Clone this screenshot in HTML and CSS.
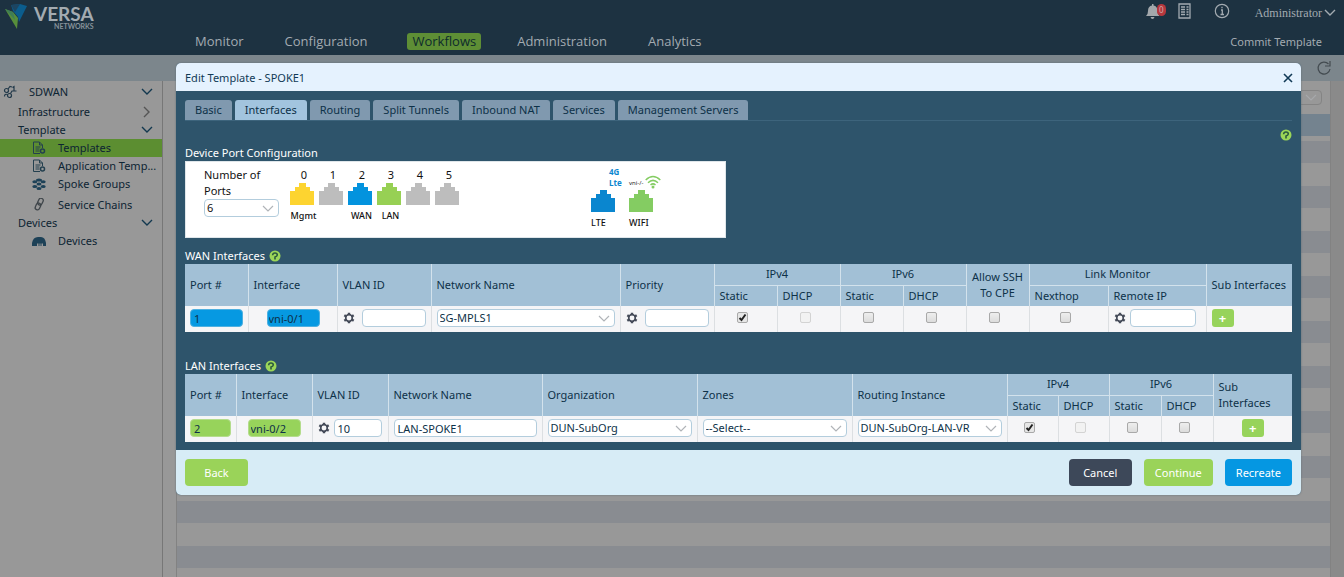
FILE: index.html
```html
<!DOCTYPE html>
<html lang="en">
<head>
<meta charset="utf-8">
<title>Edit Template - SPOKE1</title>
<link rel="stylesheet" href="styles.css">
</head>
<body>
<svg class="defs" aria-hidden="true">
  <symbol id="jack" viewBox="0 0 24 22"><path fill="currentColor" d="M0 22V8h5V4h4V0h7v4h4v4h4v14z"/></symbol>
  <symbol id="help" viewBox="0 0 12 12"><circle cx="6" cy="6" r="5.5" fill="#9bd658"/><path d="M3.600 5.200Q3.800 3 6 3t2.300 2Q8.200 6.300 6 7V9.500" fill="none" stroke="#2b5a3e" stroke-width="1.600"/></symbol>
  <symbol id="gear" viewBox="0 0 12 12"><path d="M6 .8v2M6 9.200v2M1.300 3.300l2 1.200M8.700 7.500l2 1.200M1.300 8.700l2-1.200M8.700 4.500l2-1.200" stroke="#454b59" stroke-width="2.400"/><circle cx="6" cy="6" r="3.300" fill="none" stroke="#454b59" stroke-width="1.700"/></symbol>
  <symbol id="down" viewBox="0 0 12 8"><path d="M1 1l5 5 5-5" fill="none" stroke="currentColor" stroke-width="1.400"/></symbol>
  <symbol id="doc" viewBox="0 0 14 14"><path d="M1.500 1h6l3 3v3M1.500 1v11.500H8M7.500 1v3h3M3.500 6h5M3.500 8h4M3.500 10h4" fill="none" stroke="currentColor"/><circle cx="10.500" cy="10" r="2" fill="none" stroke="currentColor" stroke-width="1.500"/></symbol>
</svg>

<header class="topbar">
  <a class="logo" href="#" aria-label="Versa Networks">
    <svg class="logo-mark" viewBox="0 0 24 26" aria-hidden="true"><path d="M0 5l8 3 5 6-1 11z" fill="#578f3b"/><path d="M0 5l8 3 2 8z" fill="#3f7d55"/><path d="M6 1l9-1 7 2-8 16-1-5-5-6z" fill="#0b5d8d"/><path d="M6 1l9-1-5 8z" fill="#1d4561"/></svg>
    <span class="logo-text"><b>VERSA</b><small>NETWORKS</small></span>
  </a>
  <nav class="mainnav">
    <a href="#">Monitor</a><a href="#">Configuration</a><a href="#" class="current">Workflows</a><a href="#">Administration</a><a href="#">Analytics</a>
  </nav>
  <div class="tools">
    <div class="tools-row">
      <button class="plain bell" aria-label="Notifications"><svg width="20" height="18" viewBox="0 0 20 18" aria-hidden="true"><path d="M1 14q2-1.500 2-5 0-5 4-5.500V2h1.500v1.500Q12.500 4 12.500 9q0 3.500 2 5zM5.500 15h4q-.5 2-2 2t-2-2z" fill="#a3a8ac"/></svg><span class="badge">0</span></button>
      <button class="plain list" aria-label="Tasks"><svg width="13" height="16" viewBox="0 0 13 16" aria-hidden="true"><path d="M1 1h11v14H1zM3 4h4M3 6.500h4M3 9h4M3 11.500h4M8.500 4h2M8.500 6.500h2M8.500 9h2M8.500 11.500h2" fill="none" stroke="#a3abb1" stroke-width="1.300"/></svg></button>
      <button class="plain info" aria-label="Information"><svg width="16" height="16" viewBox="0 0 16 16" aria-hidden="true"><circle cx="8" cy="8" r="6.700" fill="none" stroke="#a3abb1" stroke-width="1.200"/><path d="M7 7h1.300v4.500M6.500 11.500h3.500M8 3.800v1.500" fill="none" stroke="#a3abb1" stroke-width="1.300"/></svg></button>
      <button class="plain user">Administrator<svg width="12" height="8" aria-hidden="true"><use href="#down"/></svg></button>
    </div>
    <a class="commit" href="#">Commit Template</a>
  </div>
</header>

<div class="subbar"><button class="plain" aria-label="Refresh"><svg width="16" height="16" viewBox="0 0 16 16" aria-hidden="true"><path d="M12.500 4A6 6 0 1 0 14 9M14 1v5H9" fill="none" stroke="#434b50" stroke-width="1.200"/></svg></button></div>

<div class="page">
  <aside class="sidebar">
    <ul>
      <li class="root"><svg width="14" height="14" viewBox="0 0 14 14" aria-hidden="true"><g fill="none" stroke="#22394a" stroke-width="1.200"><circle cx="3.500" cy="5.500" r="2"/><circle cx="6.500" cy="10.500" r="2"/><path d="M5 4l2-2.500 2 .5M7.500 8.500l1.500-2.500h4.500M11 6V1.500L9.500 2.500M1.500 11.500q0-3 3-2"/></g></svg><a href="#">SDWAN</a><svg class="chev" width="12" height="8"><use href="#down"/></svg></li>
      <li class="group"><a href="#">Infrastructure</a><svg class="chev closed" width="12" height="8"><use href="#down"/></svg></li>
      <li class="group"><a href="#">Template</a><svg class="chev" width="12" height="8"><use href="#down"/></svg></li>
      <li class="leaf active"><svg width="14" height="14"><use href="#doc"/></svg><a href="#">Templates</a></li>
      <li class="leaf"><svg width="14" height="14"><use href="#doc"/></svg><a href="#">Application Temp...</a></li>
      <li class="leaf"><svg width="14" height="14" viewBox="0 0 14 14" aria-hidden="true"><g fill="#1d4157"><ellipse cx="7" cy="3" rx="3" ry="1.600"/><ellipse cx="2.800" cy="4.800" rx="2.500" ry="1.500"/><ellipse cx="11.200" cy="4.800" rx="2.500" ry="1.500"/><ellipse cx="7" cy="7" rx="2.500" ry="1.500"/><ellipse cx="2.800" cy="9.500" rx="2.500" ry="1.600"/><ellipse cx="11.200" cy="9.500" rx="2.500" ry="1.600"/><ellipse cx="7" cy="11.500" rx="2.500" ry="1.600"/></g></svg><a href="#">Spoke Groups</a></li>
      <li class="leaf chain"><svg width="14" height="14" viewBox="0 0 14 14" aria-hidden="true"><g fill="none" stroke="#3f454a" stroke-width="1.300"><rect x="6" y="0" width="4.500" height="7" rx="2.200" transform="rotate(25 8 4)"/><rect x="3.500" y="5" width="4.500" height="7" rx="2.200" transform="rotate(25 6 9)"/></g></svg><a href="#">Service Chains</a></li>
      <li class="group"><a href="#">Devices</a><svg class="chev" width="12" height="8"><use href="#down"/></svg></li>
      <li class="leaf"><svg width="14" height="14" viewBox="0 0 14 14" aria-hidden="true"><path d="M0 12V9q1-6 6-6h3q4 0 5 6v3h-3V9.500H9.500V12h-1V9.500h-1V12h-1V9.500H5V12z" fill="#1d4157"/></svg><a href="#">Devices</a></li>
    </ul>
  </aside>
  <main class="content">
    <div class="filter"><select aria-label="Filter"><option></option></select></div>
    <div class="grid-head"></div>
    <div class="grid-rows"></div>
  </main>
</div>

<div class="modal" role="dialog" aria-labelledby="dlg-title">
  <div class="modal-head"><h1 id="dlg-title">Edit Template - SPOKE1</h1><button class="plain" aria-label="Close"><svg width="10" height="10" viewBox="0 0 10 10" aria-hidden="true"><path d="M1 1l8 8M9 1L1 9" stroke="#113a56" stroke-width="1.600"/></svg></button></div>
  <div class="modal-body">
    <div class="tabs" role="tablist">
      <button role="tab">Basic</button><button role="tab" aria-selected="true">Interfaces</button><button role="tab">Routing</button><button role="tab">Split Tunnels</button><button role="tab">Inbound NAT</button><button role="tab">Services</button><button role="tab">Management Servers</button>
    </div>
    <div class="helprow"><svg width="12" height="12"><use href="#help"/></svg></div>
    <h2>Device Port Configuration</h2>
    <section class="ports">
      <div class="count"><label for="nports">Number of Ports</label><select id="nports"><option>6</option></select></div>
      <div class="jacks">
        <div class="jack yellow"><span>0</span><svg><use href="#jack"/></svg><b>Mgmt</b></div>
        <div class="jack"><span>1</span><svg><use href="#jack"/></svg></div>
        <div class="jack blue"><span>2</span><svg><use href="#jack"/></svg><b>WAN</b></div>
        <div class="jack green"><span>3</span><svg><use href="#jack"/></svg><b>LAN</b></div>
        <div class="jack"><span>4</span><svg><use href="#jack"/></svg></div>
        <div class="jack"><span>5</span><svg><use href="#jack"/></svg></div>
      </div>
      <div class="radios">
        <div class="radio lte"><div class="tag"><strong>4G</strong><em>Lte<svg width="4" height="7" viewBox="0 0 4 7"><path d="M0 3q2 0 2 3M0 1q3.500 0 3.500 4" fill="none" stroke="#0a86cf" stroke-width=".8"/></svg></em></div><svg class="plug"><use href="#jack"/></svg><b>LTE</b></div>
        <div class="radio wifi"><div class="tag"><i>vni-/-</i><svg width="16" height="14" viewBox="0 0 16 14"><path d="M.7 5q7.300-7 14.600 0M3 7.700q5-4.600 10 0M5.500 10q2.500-2.200 5 0" fill="none" stroke="#84cc62" stroke-width="1.500"/><circle cx="8" cy="12" r="1.500" fill="#84cc62"/></svg></div><svg class="plug"><use href="#jack"/></svg><b>WIFI</b></div>
      </div>
    </section>

    <h2 class="wan-title">WAN Interfaces <svg width="12" height="12"><use href="#help"/></svg></h2>
    <table>
      <colgroup><col class="c63"><col class="c89"><col class="c94"><col class="c189"><col class="c94"><col class="c63"><col class="c63"><col class="c63"><col class="c63"><col class="c63"><col class="c79"><col class="c98"><col class="c86"></colgroup>
      <thead>
        <tr><th rowspan="2">Port #</th><th rowspan="2">Interface</th><th rowspan="2">VLAN ID</th><th rowspan="2">Network Name</th><th rowspan="2">Priority</th><th colspan="2" class="mid">IPv4</th><th colspan="2" class="mid">IPv6</th><th rowspan="2" class="mid wrap">Allow SSH To CPE</th><th colspan="2" class="mid">Link Monitor</th><th rowspan="2">Sub Interfaces</th></tr>
        <tr><th>Static</th><th>DHCP</th><th>Static</th><th>DHCP</th><th>Nexthop</th><th>Remote IP</th></tr>
      </thead>
      <tbody>
        <tr>
          <td><input class="fill blue" value="1" aria-label="Port number"></td>
          <td><input class="fill blue chip" value="vni-0/1" aria-label="Interface"></td>
          <td><div class="geared"><svg width="12" height="12"><use href="#gear"/></svg><input class="w64" aria-label="VLAN ID"></div></td>
          <td><select aria-label="Network name"><option>SG-MPLS1</option></select></td>
          <td><div class="geared"><svg width="12" height="12"><use href="#gear"/></svg><input class="w64" aria-label="Priority"></div></td>
          <td class="tick"><input type="checkbox" checked aria-label="IPv4 static"></td>
          <td class="tick"><input type="checkbox" disabled aria-label="IPv4 DHCP"></td>
          <td class="tick"><input type="checkbox" aria-label="IPv6 static"></td>
          <td class="tick"><input type="checkbox" aria-label="IPv6 DHCP"></td>
          <td class="tick"><input type="checkbox" aria-label="Allow SSH"></td>
          <td class="tick"><input type="checkbox" aria-label="Nexthop"></td>
          <td><div class="geared near"><svg width="12" height="12"><use href="#gear"/></svg><input class="w66" aria-label="Remote IP"></div></td>
          <td><button class="add" aria-label="Add WAN sub interface">+</button></td>
        </tr>
      </tbody>
    </table>

    <h2 class="lan-title">LAN Interfaces <svg width="12" height="12"><use href="#help"/></svg></h2>
    <table>
      <colgroup><col class="c51"><col class="c76"><col class="c76"><col class="c154"><col class="c155"><col class="c155"><col class="c155"><col class="c51"><col class="c51"><col class="c52"><col class="c52"><col class="c79"></colgroup>
      <thead>
        <tr><th rowspan="2">Port #</th><th rowspan="2">Interface</th><th rowspan="2">VLAN ID</th><th rowspan="2">Network Name</th><th rowspan="2">Organization</th><th rowspan="2">Zones</th><th rowspan="2">Routing Instance</th><th colspan="2" class="mid">IPv4</th><th colspan="2" class="mid">IPv6</th><th rowspan="2" class="wrap">Sub Interfaces</th></tr>
        <tr><th>Static</th><th>DHCP</th><th>Static</th><th>DHCP</th></tr>
      </thead>
      <tbody>
        <tr>
          <td><input class="fill green" value="2" aria-label="Port number"></td>
          <td><input class="fill green chip narrow" value="vni-0/2" aria-label="Interface"></td>
          <td><div class="geared near"><svg width="12" height="12"><use href="#gear"/></svg><input class="w48" value="10" aria-label="VLAN ID"></div></td>
          <td><input class="fill" value="LAN-SPOKE1" aria-label="Network name"></td>
          <td><select aria-label="Organization"><option>DUN-SubOrg</option></select></td>
          <td><select aria-label="Zones"><option>--Select--</option></select></td>
          <td><select aria-label="Routing instance"><option>DUN-SubOrg-LAN-VR</option></select></td>
          <td class="tick"><input type="checkbox" checked aria-label="IPv4 static"></td>
          <td class="tick"><input type="checkbox" disabled aria-label="IPv4 DHCP"></td>
          <td class="tick"><input type="checkbox" aria-label="IPv6 static"></td>
          <td class="tick"><input type="checkbox" aria-label="IPv6 DHCP"></td>
          <td class="mid"><button class="add" aria-label="Add LAN sub interface">+</button></td>
        </tr>
      </tbody>
    </table>
  </div>
  <footer class="modal-foot">
    <button class="btn green">Back</button><span class="spacer"></span><button class="btn dark">Cancel</button><button class="btn green">Continue</button><button class="btn blue">Recreate</button>
  </footer>
</div>
</body>
</html>
```
FILE: styles.css
```css
* { box-sizing: border-box; }
html, body { height: 100%; }
body {
  margin: 0;
  display: flex;
  flex-direction: column;
  overflow: hidden;
  background: #989898;
  color: #0d2b3e;
  font: 11px/16px "Noto Sans", "Open Sans", sans-serif;
}
a { color: inherit; text-decoration: none; }
button, input, select { font: inherit; color: inherit; margin: 0; }
.defs { position: absolute; width: 0; height: 0; }
.plain { border: 0; background: none; padding: 0; display: flex; align-items: center; }

/* top bar */
.topbar { display: flex; height: 55px; flex: none; background: #1d3241; color: #a3abb1; }
.logo { width: 190px; padding: 4px 0 0 5px; display: flex; gap: 5px; }
.logo-mark { width: 24px; height: 26px; }
.logo-text { display: flex; flex-direction: column; align-items: flex-end; font-family: Lato, sans-serif; }
.logo-text b { font-size: 19px; line-height: 19px; }
.logo-text small { font-size: 7px; line-height: 7px; font-weight: bold; color: #87929a; }
.mainnav { flex: 1; display: flex; gap: 31px; align-items: flex-end; padding-bottom: 5px; }
.mainnav a { padding: 0 5px; font: 13px/17px "Open Sans", sans-serif; border-radius: 3px; }
.mainnav .current { background: #5e8e35; color: #0d2b2c; margin-left: 4px; }
.tools { display: flex; flex-direction: column; align-items: flex-end; }
.tools-row { display: flex; align-items: center; height: 22px; padding-right: 8px; }
.bell { position: relative; margin-right: 13px; }
.badge { position: absolute; right: -1px; top: 2px; width: 9px; height: 12px; border-radius: 5px; background: #b6373d; color: #d0a9ab; font-size: 8px; line-height: 12px; text-align: center; }
.list { margin-right: 23px; }
.info { margin-right: 25px; }
.user { gap: 2px; font: 12px/16px "Liberation Serif", serif; padding-top: 3px; }
.commit { padding: 12px 22px 0 0; }

.subbar { height: 26px; flex: none; background: #7c868c; display: flex; align-items: center; justify-content: flex-end; padding-right: 12px; }

/* page behind the dialog */
.page { display: flex; flex: 1; min-height: 0; background: linear-gradient(to left, #8a8a8a 13px, #989898 13px); }
.sidebar { width: 163px; border-right: 1px solid #777; }
.sidebar ul { list-style: none; margin: 0; padding: 0; }
.sidebar li { display: flex; align-items: center; height: 18px; color: #0d2433; }
.sidebar .root { height: 22px; padding-left: 3px; gap: 12px; }
.sidebar .group { padding-left: 18px; }
.sidebar .leaf { padding-left: 32px; gap: 12px; }
.sidebar .leaf svg { color: #24404f; flex: none; }
.sidebar .chain { height: 21px; padding-top: 3px; }
.sidebar .active { background: #5c8e31; }
.chev { margin: 0 9px 0 auto; color: #12384f; }
.closed { transform: rotate(-90deg); color: #555; }
.content { flex: 1; display: flex; flex-direction: column; margin: 0 13px; border: solid #828282; border-width: 0 1px; }
.filter { height: 33px; padding-top: 9px; display: flex; justify-content: flex-end; }
.filter select { width: 120px; height: 15px; margin-right: 8px; background-color: transparent; border-color: #777; opacity: .6; }
.grid-head { height: 22px; background: #74838f; }
.grid-rows { flex: 1; background: repeating-linear-gradient(#898c91 0 22px, #989898 22px 45px) 0 5px; }

/* dialog */
.modal { position: absolute; left: 176px; right: 43px; top: 63px; border-radius: 5px; overflow: hidden; background: #2e546b; box-shadow: 0 0 2px #5a6a74; }
.modal-head { height: 28px; background: #e5f2fe; display: flex; align-items: center; justify-content: space-between; padding: 2px 8px 0 9px; color: #113a56; }
h1, h2 { margin: 0; font-size: 11px; line-height: 16px; font-weight: normal; }
.modal-body { padding: 9px 9px 8px; }
h2 { color: #fff; display: flex; align-items: center; gap: 4px; }
.tabs { display: flex; gap: 3px; border-bottom: 1px solid #3d647c; }
.tabs button { height: 20px; padding: 0 10px; border: 0; border-radius: 3px 3px 0 0; background: #8099af; color: #0d3148; }
.tabs button[aria-selected] { background: #a2c4de; }
.helprow { height: 24px; padding: 8px 0 0; display: flex; justify-content: flex-end; }
.ports { display: flex; width: 541px; height: 77px; background: #fff; color: #111; border: 1px solid #dfe6ea; padding: 5px 18px; }
.count { width: 86px; display: flex; flex-direction: column; }
.count label { width: 60px; }
.count select { width: 75px; }
.jacks { display: flex; gap: 5px; }
.jack { width: 24px; display: flex; flex-direction: column; align-items: center; color: #bdbdbd; }
.jack span { color: #111; padding-left: 4px; }
.jack svg, .plug { width: 24px; height: 22px; flex: none; }
.jack b, .radio b { font-size: 9px; line-height: 22px; font-weight: 500; color: #111; }
.jack b { padding-left: 3px; }
.jack.yellow { color: #fdd430; }
.jack.blue { color: #0393de; }
.jack.green { color: #97d054; }
.radios { display: flex; gap: 14px; margin-left: 132px; }
.radio { width: 24px; display: flex; flex-direction: column; }
.lte { color: #0a86cf; }
.wifi { color: #84cc62; }
.tag { height: 23px; flex: none; display: flex; }
.lte .tag { flex-direction: column; padding-left: 18px; }
.tag strong { font-size: 8px; line-height: 9px; }
.tag em { font: bold 8px/13px "Noto Sans", sans-serif; display: flex; }
.tag i { font: 6px/8px "Noto Sans", sans-serif; color: #222; padding-top: 12px; width: 16px; flex: none; }
.wifi .tag svg { margin-top: 8px; flex: none; }

.wan-title { margin-top: 10px; }
.lan-title { margin-top: 26px; }
table { width: 100%; table-layout: fixed; border-collapse: collapse; color: #0d3148; }
th { background: #a2c0d6; height: 21px; padding: 0 0 0 5px; text-align: left; font-weight: normal; white-space: nowrap; border: solid #d3e2ec; border-width: 0 0 0 1px; }
th[colspan] { border-bottom-width: 1px; }
th:first-child[rowspan] { border-left: 0; }
th.wrap { white-space: normal; }
th.mid { padding: 0; text-align: center; }
td { background: #f5f5f7; height: 26px; padding: 0 5px 2px; border-left: 1px solid #dcdfe2; vertical-align: middle; }
td:first-child { border-left: 0; }
td.mid { padding: 0 0 2px; }
td.tick { padding: 0 6px 4px 0; }
.c51 { width: 51px; } .c52 { width: 52px; } .c63 { width: 63px; }
.c76 { width: 76px; } .c79 { width: 79px; } .c86 { width: 86px; } .c89 { width: 89px; }
.c94 { width: 94px; } .c98 { width: 98px; } .c154 { width: 154px; } .c155 { width: 155px; } .c189 { width: 189px; }

input:not([type]), select { display: block; height: 18px; padding: 0 3px; border: 1px solid #b3cddd; border-radius: 4px; background: #fff; line-height: 16px; outline: 0; }
select { width: 100%; padding: 0 2px; appearance: none; background: #fff url("data:image/svg+xml,%3Csvg xmlns='http://www.w3.org/2000/svg' width='12' height='7'%3E%3Cpath d='M1 1l5 5 5-5' fill='none' stroke='%23b0b4b8' stroke-width='1.200'/%3E%3C/svg%3E") no-repeat right 4px center; }
.fill { width: 100%; }
input.blue { background: #0699e2; border-color: #4eb0e0; }
input.green { background: #97d35b; border-color: #b4dc8c; }
input.chip { width: 53px; margin-left: 13px; padding: 0 1px; }
input.narrow { margin-left: 6px; padding: 0 2px; }
.w48 { width: 48px; } .w64 { width: 64px; } .w66 { width: 66px; }
.geared { display: flex; align-items: center; justify-content: space-between; }
.geared.near { justify-content: flex-start; gap: 4px; }
input[type=checkbox] { appearance: none; display: block; margin: 0 auto; width: 11px; height: 11px; border: 1px solid #a9a9a9; border-radius: 2px; background: linear-gradient(#eee, #dcdcdc); }
input[type=checkbox]:disabled { border-color: #d3d3d3; background: #f2f2f2; }
input[type=checkbox]:checked { background: url("data:image/svg+xml,%3Csvg xmlns='http://www.w3.org/2000/svg' width='9' height='9'%3E%3Cpath d='M1.500 5l2 2L7.500 1.500' fill='none' stroke='%23222' stroke-width='2'/%3E%3C/svg%3E") center no-repeat, #e6e6e6; }
.add { display: block; width: 22px; height: 18px; padding: 0; border: 0; border-radius: 3px; background: #97d35b; color: #fff; font: bold 13px/16px "Noto Sans", sans-serif; }
td.mid .add { margin: 0 auto; }

.modal-foot { height: 45px; padding: 0 9px; display: flex; align-items: center; gap: 12px; background: #d7ecf6; }
.spacer { flex: 1; }
.btn { min-width: 63px; height: 27px; padding: 0 11px; border: 0; border-radius: 4px; color: #fff; }
.btn.green { background: #9ad359; }
.btn.dark { background: #3d4859; }
.btn.blue { background: #0597e2; }
```
